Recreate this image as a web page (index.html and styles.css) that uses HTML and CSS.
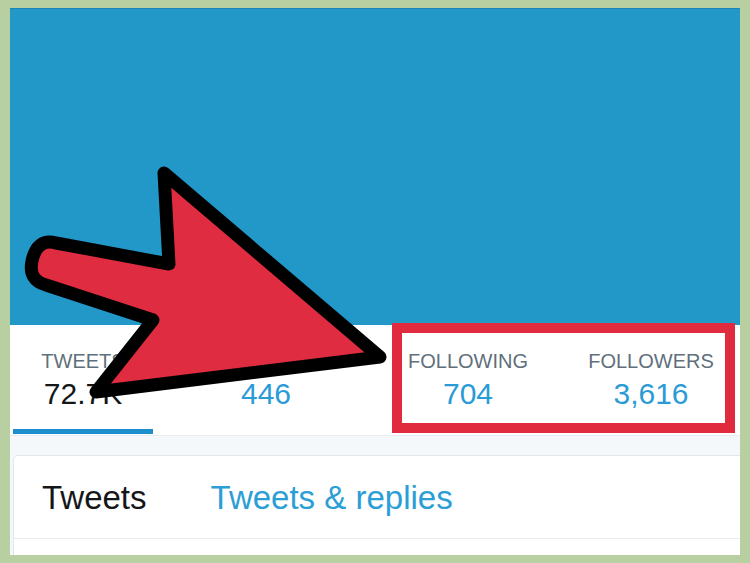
FILE: index.html
```html
<!DOCTYPE html>
<html>
<head>
<meta charset="utf-8">
<link rel="stylesheet" href="styles.css">
</head>
<body>
<div class="frame">
  <div class="header"></div>
  <div class="nav">
    <div class="stat stat-active">
      <div class="stat-label">TWEETS</div>
      <div class="stat-value stat-value-dark">72.7K</div>
    </div>
    <div class="stat">
      <div class="stat-label">PHOTOS</div>
      <div class="stat-value">446</div>
    </div>
    <div class="stat">
      <div class="stat-label">FOLLOWING</div>
      <div class="stat-value">704</div>
    </div>
    <div class="stat">
      <div class="stat-label">FOLLOWERS</div>
      <div class="stat-value">3,616</div>
    </div>
  </div>
  <div class="card">
    <div class="tabs">
      <span class="tab tab-current">Tweets</span>
      <span class="tab">Tweets &amp; replies</span>
    </div>
  </div>
</div>
<div class="highlight"></div>
<svg class="arrow" width="750" height="563" viewBox="0 0 750 563">
  <path d="M164 173 L380 357 L96 392 L153 320 L46 285 Q28 280 32 261 Q37 238 56 243 L169 264 Z" fill="#e02c40" stroke="#000" stroke-width="13" stroke-linejoin="round"/>
</svg>
</body>
</html>
```
FILE: styles.css
```css
html, body {
  margin: 0;
  padding: 0;
}
body {
  width: 750px;
  height: 563px;
  background: #b8cfa1;
  font-family: "Liberation Sans", Arial, sans-serif;
  overflow: hidden;
}
.frame {
  margin: 8px 10px;
  height: 547px;
  background: #f5f8fa;
  overflow: hidden;
}
.header {
  height: 316px;
  background: #2298c8;
  border-top: 1px solid #1a86b4;
}
.nav {
  height: 110px;
  background: #fff;
  border-bottom: 1px solid #e6ecf0;
  padding-left: 3px;
  display: grid;
  grid-template-columns: 140px 226px 178px 188px;
}
.stat {
  display: flex;
  flex-direction: column;
  align-items: center;
  padding-top: 26px;
  height: 109px;
  box-sizing: border-box;
}
.stat-active {
  border-bottom: 5px solid #1b8fcc;
}
.stat-label {
  font-size: 20px;
  line-height: 20px;
  color: #5f6f7c;
  white-space: nowrap;
}
.stat-value {
  margin-top: 8px;
  font-size: 30px;
  line-height: 30px;
  color: #2a9bd6;
}
.stat-value-dark {
  color: #14171a;
}
.card {
  margin-top: 19px;
  margin-left: 3px;
  width: 760px;
  height: 200px;
  background: #fff;
  border: 1px solid #e1e8ed;
  border-radius: 5px;
}
.tabs {
  padding: 25px 0 24px 28px;
  border-bottom: 1px solid #e6ecf0;
  display: flex;
  gap: 64px;
}
.tab {
  font-size: 33px;
  line-height: 33px;
  color: #2b9ed6;
}
.tab-current {
  color: #14171a;
}
.highlight {
  position: absolute;
  left: 392px;
  top: 323px;
  width: 343px;
  height: 110px;
  box-sizing: border-box;
  border: 10px solid #e02a3e;
}
.arrow {
  position: absolute;
  left: 0;
  top: 0;
}
```
